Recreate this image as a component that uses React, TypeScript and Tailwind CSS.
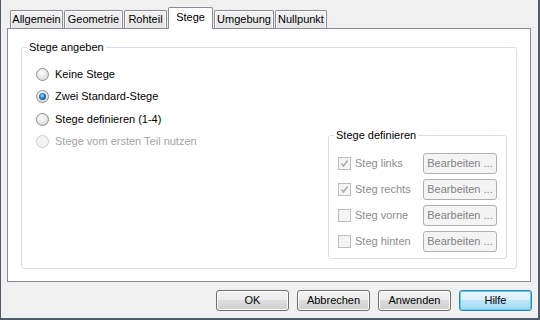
import React from "react";

const tabs: { label: string; w: string; active?: boolean }[] = [
  { label: "Allgemein", w: "w-[53px]" },
  { label: "Geometrie", w: "w-[59px]" },
  { label: "Rohteil", w: "w-[43px]" },
  { label: "Stege", w: "w-[45px]", active: true },
  { label: "Umgebung", w: "w-[60px]" },
  { label: "Nullpunkt", w: "w-[52px]" },
];

function Radio({ checked, disabled }: { checked?: boolean; disabled?: boolean }) {
  return (
    <div
      className={
        disabled
          ? "w-[13px] h-[13px] rounded-full border border-[#cbcbcb] bg-[#f4f4f4] flex items-center justify-center shrink-0"
          : "w-[13px] h-[13px] rounded-full border border-[#8e8f8f] bg-[radial-gradient(circle_at_40%_35%,#ffffff_0%,#eeeeee_35%,#cfcfcf_100%)] flex items-center justify-center shrink-0"
      }
    >
      {checked && (
        <div className="w-[7px] h-[7px] rounded-full bg-[radial-gradient(circle_at_45%_40%,#b7e3fb_0%,#2d86c8_40%,#0b3d6b_100%)]" />
      )}
    </div>
  );
}

function Check({ checked }: { checked?: boolean }) {
  return (
    <div className="w-[13px] h-[13px] border border-[#bdbdbd] bg-[#f4f4f4] flex items-center justify-center shrink-0">
      {checked && (
        <svg width="11" height="11" viewBox="0 0 11 11">
          <path d="M2.5 5.5 L4.5 8 L8.5 2.5" fill="none" stroke="#a9a9a9" strokeWidth="1.4" />
        </svg>
      )}
    </div>
  );
}

function DialogButton({ label, primary }: { label: string; primary?: boolean }) {
  return (
    <div
      className={
        primary
          ? "w-[73px] h-[21px] rounded-[3px] border border-[#3c7fb1] bg-[linear-gradient(to_bottom,#eaf6fd_0%,#d9f0fc_50%,#bee6fd_50%,#a7d9f5_100%)] shadow-[inset_0_0_0_1px_#48d4f8] flex items-center justify-center text-black"
          : "w-[73px] h-[21px] rounded-[3px] border border-[#707070] bg-[linear-gradient(to_bottom,#f2f2f2_0%,#ebebeb_50%,#dddddd_50%,#cfcfcf_100%)] shadow-[inset_0_0_0_1px_#fcfcfc] flex items-center justify-center text-black"
      }
    >
      {label}
    </div>
  );
}

const steg = [
  { label: "Steg links", checked: true },
  { label: "Steg rechts", checked: true },
  { label: "Steg vorne", checked: false },
  { label: "Steg hinten", checked: false },
];

export default function App() {
  return (
    <div className="w-[540px] h-[320px] bg-[#f0f0f0] border-l border-r-2 border-b-2 border-[#4e5c6b] pt-[7px] flex flex-col font-['Liberation_Sans',Arial,sans-serif] text-[11px] text-black">
      {/* tabs */}
      <div className="flex items-end h-[21px] pl-[9px] gap-px">
        {tabs.map((t) =>
          t.active ? (
            <div
              key={t.label}
              className={`${t.w} h-[22px] -mb-px relative z-10 bg-white border border-b-0 border-[#898c95] rounded-t-[2px] flex items-center justify-center pb-[2px]`}
            >
              {t.label}
            </div>
          ) : (
            <div
              key={t.label}
              className={`${t.w} h-[18px] border border-b-0 border-[#898c95] rounded-t-[2px] bg-[linear-gradient(to_bottom,#f3f3f3,#e4e4e4)] shadow-[inset_1px_1px_0_#ffffff,inset_-1px_0_0_#ffffff] flex items-center justify-center`}
            >
              {t.label}
            </div>
          )
        )}
      </div>

      {/* panel */}
      <div className="ml-[6px] w-[524px] h-[254px] border border-[#898c95] bg-white px-[13px] pt-[11px] pb-[12px]">
        <fieldset className="border border-[#d5dfe5] rounded-[3px]">
          <legend className="ml-[5px] px-[2px] leading-[14px]">Stege angeben</legend>
          <div className="h-[214px] flex items-end justify-between pl-[14px] pr-[9px] pb-[9px]">
            <div className="self-start mt-[9px] flex flex-col">
              <div className="h-[22px] flex items-center gap-[6px]">
                <Radio />
                <span>Keine Stege</span>
              </div>
              <div className="h-[23px] flex items-center gap-[6px]">
                <Radio checked />
                <span>Zwei Standard-Stege</span>
              </div>
              <div className="h-[22px] flex items-center gap-[6px]">
                <Radio />
                <span>Stege definieren (1-4)</span>
              </div>
              <div className="h-[23px] flex items-center gap-[6px]">
                <Radio disabled />
                <span className="text-[#a3a3a3]">Stege vom ersten Teil nutzen</span>
              </div>
            </div>

            <fieldset className="w-[179px] border border-[#d5dfe5] rounded-[3px]">
              <legend className="ml-[5px] px-[2px] leading-[14px]">Stege definieren</legend>
              <div className="flex flex-col gap-[5px] pt-[11px] px-[9px] pb-[6px]">
                {steg.map((s) => (
                  <div key={s.label} className="flex items-center h-[21px]">
                    <Check checked={s.checked} />
                    <span className="ml-[4px] text-[#8d8d8d]">{s.label}</span>
                    <div className="ml-auto w-[74px] h-[21px] rounded-[3px] border border-[#adb2b5] bg-[#f4f4f4] flex items-center justify-center text-[#838383]">
                      Bearbeiten ...
                    </div>
                  </div>
                ))}
              </div>
            </fieldset>
          </div>
        </fieldset>
      </div>

      {/* buttons */}
      <div className="mt-[8px] flex justify-end gap-[8px] pr-[6px]">
        <DialogButton label="OK" />
        <DialogButton label="Abbrechen" />
        <DialogButton label="Anwenden" />
        <DialogButton label="Hilfe" primary />
      </div>
    </div>
  );
}
